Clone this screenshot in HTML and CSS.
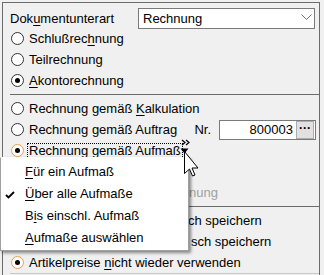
FILE: index.html
```html
<!DOCTYPE html>
<html lang="de">
<head>
  <meta charset="UTF-8" />
  <title>Dokumentunterart</title>
  <link rel="stylesheet" href="styles.css">
</head>
<body>
  <div class="panel">
    <div class="head">
      <span class="label">Dok<u>u</u>mentunterart</span>
      <div class="select">
        <span>Rechnung</span>
        <svg class="chevron" width="11" height="7" viewBox="0 0 11 7"><polyline points="0.5,0.5 5.5,5.5 10.5,0.5" fill="none" stroke="#707070" stroke-width="1"/></svg>
      </div>
    </div>
    <div class="radio"><span class="circle"></span><span>Schlußrec<u>h</u>nung</span></div>
    <div class="radio"><span class="circle"></span><span>Teilrechnung</span></div>
    <div class="radio"><span class="circle on"></span><span><u>A</u>kontorechnung</span></div>

    <div class="sep"></div>

    <div class="radio"><span class="circle"></span><span>Rechnung gemäß <u>K</u>alkulation</span></div>
    <div class="radio">
      <span class="circle"></span><span>Rechnung gemäß Auftrag</span>
      <span class="nr">Nr.</span>
      <div class="field">
        <span class="value">800003</span>
        <span class="dots">···</span>
      </div>
    </div>
    <div class="radio"><span class="circle on hot focus-gap"></span><span class="focus">Rechnung gemäß Aufm<u>aß</u></span></div>
    <div class="radio"></div>
    <!-- left part of these rows is hidden under the popup menu -->
    <div class="radio"><span class="clip disabled">nung</span></div>

    <div class="sep"></div>

    <div class="radio"><span class="tail first">ch speichern</span></div>
    <div class="radio"><span class="tail second">sch speichern</span></div>
    <div class="radio"><span class="circle on hot"></span><span>Artikelpreise <u>n</u>icht wieder verwenden</span></div>

    <div class="sep light"></div>
  </div>

  <div class="menu">
    <div class="item"><u>F</u>ür ein Aufmaß</div>
    <div class="item">
      <svg class="check" width="10" height="8" viewBox="0 0 10 8"><polyline points="1,4 3.5,6.5 9,1" fill="none" stroke="#000" stroke-width="1.8"/></svg>
      <u>Ü</u>ber alle Aufmaße
    </div>
    <div class="item">B<u>i</u>s einschl. Aufmaß</div>
    <div class="item"><u>A</u>ufmaße auswählen</div>
  </div>

  <svg class="cursor" width="20" height="40" viewBox="0 0 20 40">
    <polyline points="2,1 5,3.5 2,6" fill="none" stroke="#000" stroke-width="1.2"/>
    <polyline points="6,1 9,3.5 6,6" fill="none" stroke="#000" stroke-width="1.2"/>
    <polygon points="4.5,14.5 0.5,9.5 8.5,9.5" fill="#000"/>
    <path d="M4.5,12.5 L4.5,34.5 L9.5,30 L12.5,37 L15,36 L12,29 L18,29 Z" fill="#fff" stroke="#000" stroke-width="1"/>
  </svg>
</body>
</html>
```

FILE: styles.css
```css
body {
  margin: 0;
  width: 324px;
  height: 275px;
  overflow: hidden;
  position: relative;
  background: #f0f0f0;
  color: #000;
  font-family: "Liberation Sans", Arial, sans-serif;
  font-size: 13px;
}
u {
  text-decoration-thickness: 1px;
  text-underline-offset: 2px;
}
.panel {
  margin: 2px 0 0 2px;
  width: 308px;
  height: 280px;
  border: 1px solid #6b6b6b;
  border-bottom: none;
  padding: 5px 0 0 8px;
}
.head {
  display: flex;
  align-items: center;
  height: 20px;
}
.label { margin-left: -1px; }
.select {
  margin-left: auto;
  margin-right: 4px;
  width: 177px;
  height: 21px;
  box-sizing: border-box;
  border: 1px solid #7a7a7a;
  background: #fff;
  display: flex;
  align-items: center;
  justify-content: space-between;
  padding: 0 2px 0 4px;
}
.chevron { margin-top: -1px; }
.radio {
  display: flex;
  align-items: center;
  height: 21px;
  white-space: nowrap;
}
.circle {
  width: 13px;
  height: 13px;
  box-sizing: border-box;
  border: 1px solid #333;
  border-radius: 50%;
  background: #fff;
  margin-right: 5px;
  display: flex;
  align-items: center;
  justify-content: center;
  flex: none;
}
.circle.on::after {
  content: "";
  width: 5px;
  height: 5px;
  border-radius: 50%;
  background: #000;
}
.circle.hot { border-color: #e8a050; }
.circle.focus-gap { margin-right: 3px; }
.focus {
  border: 1px dotted #000;
  padding: 0 1px;
  line-height: 14px;
}
.sep {
  margin: 3px 0 3px -1px;
  border-top: 1px solid #6b6b6b;
}
.sep.light { border-top-color: #c8c8c8; margin-top: 0; }
.nr { margin-left: auto; }
.field {
  margin: 0 3px 0 8px;
  width: 97px;
  height: 20px;
  box-sizing: border-box;
  border: 1px solid #7a7a7a;
  background: #fff;
  display: flex;
  align-items: center;
  justify-content: flex-end;
}
.value { margin-right: 3px; }
.dots {
  width: 18px;
  height: 18px;
  box-sizing: border-box;
  border: 1px solid #adadad;
  background: #e1e1e1;
  font-weight: bold;
  font-size: 12px;
  line-height: 13px;
  text-align: center;
  margin-right: 1px;
}
.clip { margin-left: 178px; }
.disabled { color: #a0a0a0; }
.tail.first { margin-left: 177px; }
.tail.second { margin-left: 180px; }
.menu {
  position: absolute;
  left: 0;
  top: 157px;
  width: 189px;
  height: 94px;
  box-sizing: border-box;
  background: #fff;
  border: 1px solid #a0a0a0;
  border-top-color: #fff;
  box-shadow: 2px 2px 3px rgba(0, 0, 0, 0.45);
  padding-top: 3px;
}
.item {
  position: relative;
  height: 22px;
  line-height: 22px;
  padding-left: 24px;
}
.check {
  position: absolute;
  left: 4px;
  top: 8px;
}
.cursor {
  position: absolute;
  left: 180px;
  top: 139px;
}
```
